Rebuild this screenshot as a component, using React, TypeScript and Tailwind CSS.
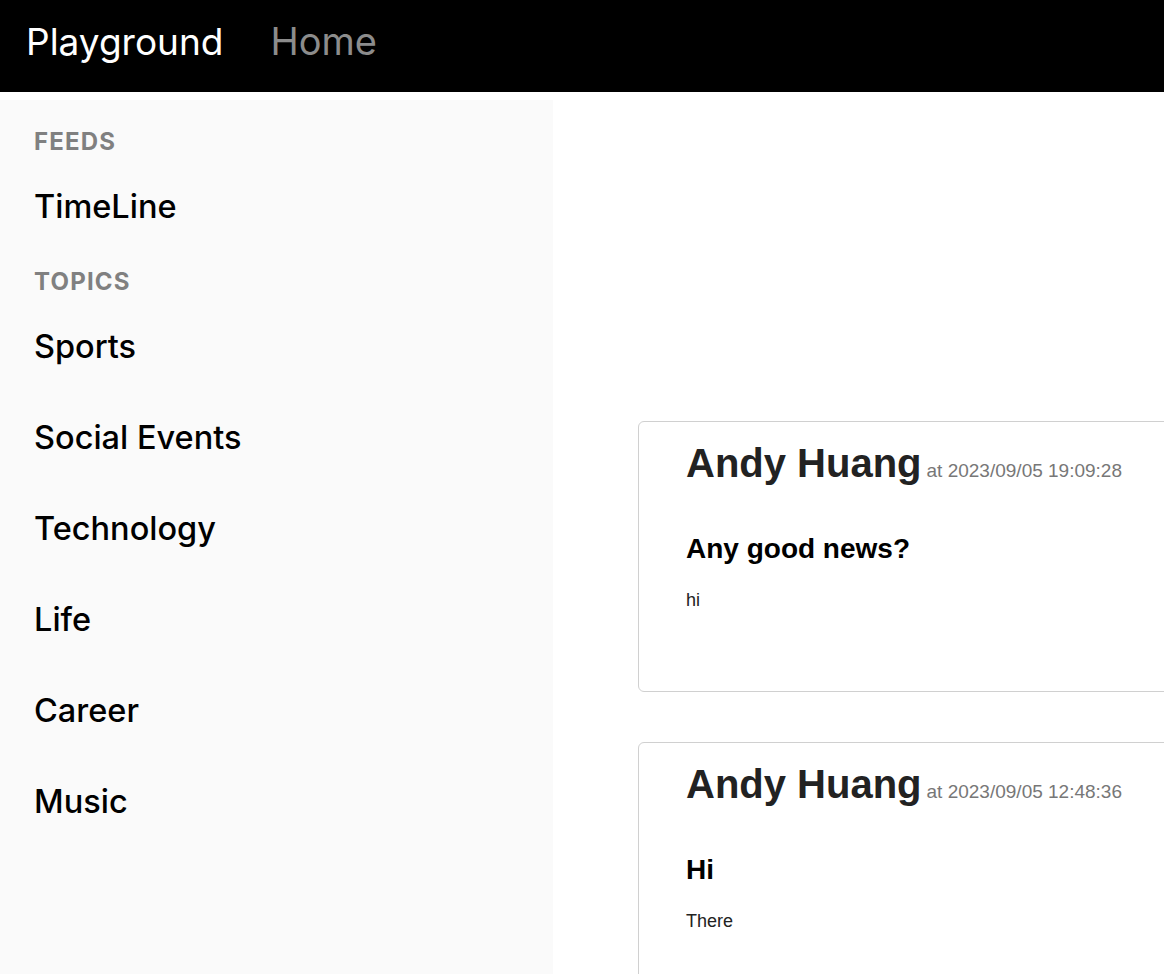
import React from "react"

const topics = ["Sports", "Social Events", "Technology", "Life", "Career", "Music"]

const posts = [
  { author: "Andy Huang", at: "2023/09/05 19:09:28", title: "Any good news?", body: "hi" },
  { author: "Andy Huang", at: "2023/09/05 12:48:36", title: "Hi", body: "There" },
]

export default function App() {
  return (
    <div className="flex h-[974px] flex-col overflow-hidden bg-white font-['Inter',sans-serif]">
      <header className="flex h-[92px] shrink-0 items-center bg-black pb-[10px] pl-[26px]">
        <span className="text-[37px] leading-none text-white">Playground</span>
        <span className="ml-[47px] text-[38px] leading-none text-[#8c8c8c]">Home</span>
      </header>

      <div className="mt-2 flex flex-1">
        <aside className="w-[553px] shrink-0 bg-[#fafafa] px-[34px] pt-[27px]">
          <div className="h-[30px] text-[24px] font-bold leading-[30px] tracking-[0.05em] text-[#808080]">FEEDS</div>
          <div className="mt-[30px] h-[40px] text-[32.5px] font-medium leading-[40px] text-black">TimeLine</div>
          <div className="mt-[40px] h-[30px] text-[24px] font-bold leading-[30px] tracking-[0.05em] text-[#808080]">TOPICS</div>
          <div className="mt-[30px] flex flex-col gap-[51px]">
            {topics.map((t) => (
              <div key={t} className="h-[40px] text-[32.5px] font-medium leading-[40px] text-black">
                {t}
              </div>
            ))}
          </div>
        </aside>

        <main className="flex-1 pl-[85px] pt-[321px] font-['Liberation_Sans',Arial,sans-serif]">
          <div className="flex flex-col gap-[50px]">
            {posts.map((p, i) => (
              <div
                key={i}
                className="w-[700px] shrink-0 rounded-[6px] border border-[#d0d0d0] px-[47px] pb-[79px] pt-[17px]"
              >
                <div className="flex items-baseline leading-[48px]">
                  <span className="text-[40px] font-bold text-[#222]">{p.author}</span>
                  <span className="ml-[5px] text-[19px] text-[#777]">at {p.at}</span>
                </div>
                <h2 className="mt-[37px] text-[28px] font-bold leading-[34px] text-black">{p.title}</h2>
                <p className="mt-[22px] text-[18px] leading-[24px] text-[#222]">{p.body}</p>
              </div>
            ))}
          </div>
        </main>
      </div>
    </div>
  )
}
